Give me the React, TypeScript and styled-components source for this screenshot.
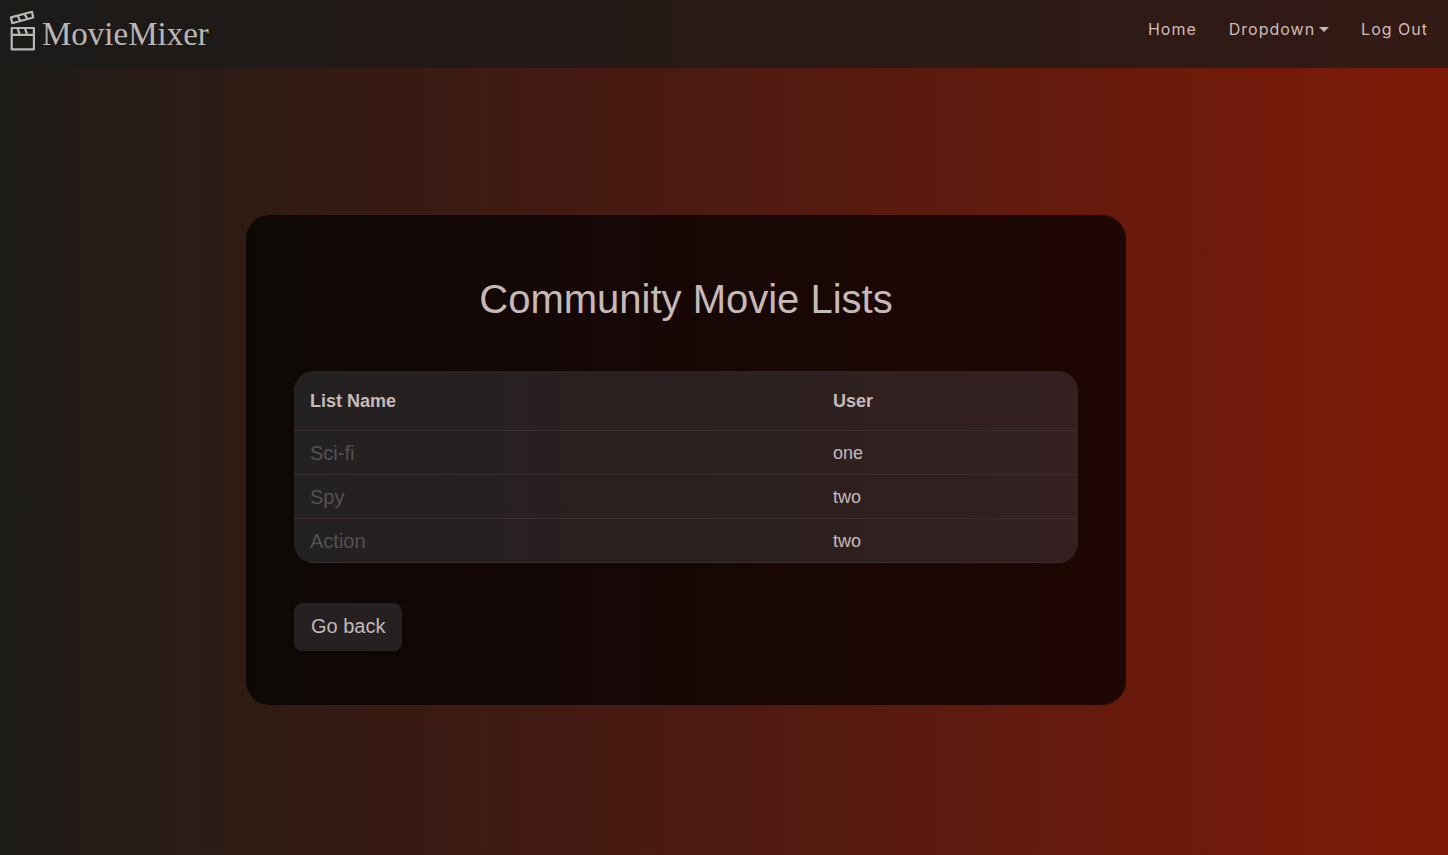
import React from "react";
import styled, { createGlobalStyle } from "styled-components";

const GlobalStyle = createGlobalStyle`
  * { box-sizing: border-box; }
  body {
    margin: 0;
    color: #c6b9b7;
    font-family: "Liberation Sans", Arial, Helvetica, sans-serif;
  }
`;

const Page = styled.div`
  display: flex;
  flex-direction: column;
  min-height: 100vh;
  background: linear-gradient(to right, #1d1c18, #311b14 20%, #4e1a11 50%, #7f1a09);
`;

const NavBar = styled.header`
  display: flex;
  justify-content: space-between;
  align-items: flex-start;
  height: 68px;
  padding: 8px 20px 0 8px;
  background: rgba(27, 27, 25, 0.75);
`;

const Brand = styled.a`
  display: flex;
  align-items: flex-start;
  gap: 4px;
  color: #b9b7b6;
  font-family: "Liberation Serif", "Times New Roman", serif;
  font-size: 33px;
  line-height: 52px;
  text-decoration: none;
`;

const NavLinks = styled.nav`
  display: flex;
  gap: 32px;
  padding-top: 8px;
`;

const navItem = `
  display: flex;
  align-items: center;
  gap: 4px;
  padding: 0;
  border: 0;
  background: none;
  color: #d0bab6;
  font-family: Inter, sans-serif;
  font-size: 16px;
  line-height: 26px;
  letter-spacing: 1px;
  text-decoration: none;
  cursor: pointer;
`;
const NavLink = styled.a`${navItem}`;
const NavToggle = styled.button`${navItem}`;

const Caret = styled.span`
  border-top: 5px solid currentColor;
  border-left: 5px solid transparent;
  border-right: 5px solid transparent;
`;

const Main = styled.main`
  display: flex;
  flex: 1;
  justify-content: center;
  align-items: center;
  padding: 32px 76px 35px 0;
`;

const Card = styled.section`
  width: 100%;
  max-width: 880px;
  padding: 60px 48px 54px;
  border-radius: 24px;
  background: rgba(0, 0, 0, 0.7);
`;

const Title = styled.h1`
  margin: 0 0 48px;
  font-size: 40px;
  font-weight: 400;
  line-height: 48px;
  text-align: center;
`;

const ListTable = styled.table`
  width: 100%;
  margin-bottom: 40px;
  border-spacing: 0;
  border-radius: 20px;
  overflow: hidden;
  table-layout: fixed;
  background: linear-gradient(to right, #242122, #2b2020 50%, #352020);
  text-align: left;
  font-size: 18px;
`;

const HeadCell = styled.th<{ $width?: string }>`
  width: ${(p) => p.$width ?? "auto"};
  height: 60px;
  padding: 2px 16px 0;
  border-bottom: 1px solid #3a2d2d;
`;

const Cell = styled.td`
  height: 44px;
  padding: 1px 16px 0;
  border-bottom: 1px solid #3a2d2d;
`;

const ListLink = styled.a`
  color: #555052;
  font-size: 20px;
  text-decoration: none;
`;

const BackButton = styled.button`
  height: 48px;
  padding: 0 16px 2px;
  border: 1px solid #252021;
  border-radius: 8px;
  background: #252021;
  color: inherit;
  font-family: inherit;
  font-size: 20px;
  cursor: pointer;
`;

const Clapperboard = () => (
  <svg
    width="30"
    height="44"
    viewBox="0 0 30 44"
    fill="none"
    stroke="currentColor"
    strokeWidth="2.2"
    strokeLinejoin="round"
    aria-hidden="true"
  >
    <path d="M3 9.4 24 3.8l1.2 5.7L4.2 15.2z" />
    <path d="M9.6 8l2.6 4.6M16.6 6l2.6 4.6" />
    <path d="M3.7 20h22.2v21.3H3.7z M3.7 26.8h22.2" />
    <path d="M9.6 20.5l2 5.5M17 20.5l2 5.5" />
  </svg>
);

const lists = [
  { name: "Sci-fi", user: "one" },
  { name: "Spy", user: "two" },
  { name: "Action", user: "two" },
];

export default function App() {
  return (
    <Page>
      <GlobalStyle />
      <NavBar>
        <Brand href="#">
          <Clapperboard />
          MovieMixer
        </Brand>
        <NavLinks>
          <NavLink href="#">Home</NavLink>
          <NavToggle type="button" aria-haspopup="true">
            Dropdown
            <Caret />
          </NavToggle>
          <NavLink href="#">Log Out</NavLink>
        </NavLinks>
      </NavBar>
      <Main>
        <Card>
          <Title>Community Movie Lists</Title>
          <ListTable>
            <thead>
              <tr>
                <HeadCell $width="66.7%">List Name</HeadCell>
                <HeadCell>User</HeadCell>
              </tr>
            </thead>
            <tbody>
              {lists.map((list) => (
                <tr key={list.name}>
                  <Cell>
                    <ListLink href="#">{list.name}</ListLink>
                  </Cell>
                  <Cell>{list.user}</Cell>
                </tr>
              ))}
            </tbody>
          </ListTable>
          <BackButton type="button">Go back</BackButton>
        </Card>
      </Main>
    </Page>
  );
}
